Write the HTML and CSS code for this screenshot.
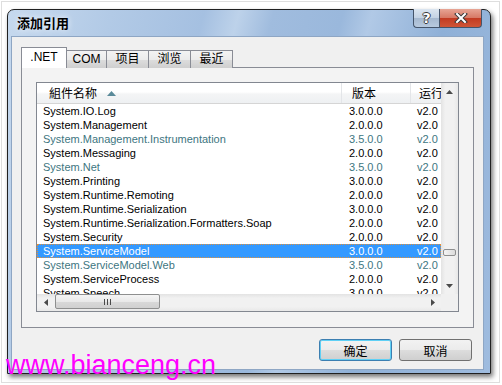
FILE: index.html
```html
<!DOCTYPE html>
<html lang="zh-CN">
<head>
    <meta charset="UTF-8">
    <title>添加引用</title>
    <link rel="stylesheet" href="styles.css">
</head>
<body>
    <div class="shot">
        <div class="window">
            <div class="titlebar">
                <span class="title">添加引用</span>
                <div class="caption-buttons">
                    <span class="cap-btn help">?</span>
                    <span class="cap-btn close">
                        <svg width="14" height="10" viewBox="0 0 14 10">
                            <path d="M3 1 L11 9 M11 1 L3 9" stroke="#3a3a3a" stroke-width="4" stroke-linecap="square"/>
                            <path d="M3 1 L11 9 M11 1 L3 9" stroke="#fff" stroke-width="2" stroke-linecap="square"/>
                        </svg>
                    </span>
                </div>
            </div>

            <div class="client">
                <div class="tabs">
                    <span class="tab active">.NET</span>
                    <span class="tab">COM</span>
                    <span class="tab">项目</span>
                    <span class="tab">浏览</span>
                    <span class="tab">最近</span>
                </div>

                <div class="panel">
                    <div class="list">
                        <div class="list-main">
                            <div class="header">
                                <span class="hcell">組件名称
                                    <svg class="sort" width="9" height="5" viewBox="0 0 9 5"><path d="M4.5 0 L9 5 L0 5 Z" fill="#5a8a99"/></svg>
                                </span>
                                <span class="hcell">版本</span>
                                <span class="hcell">运行</span>
                            </div>
                            <div class="rows">
                                <div class="row"><span>System.IO.Log</span><span>3.0.0.0</span><span>v2.0</span></div>
                                <div class="row"><span>System.Management</span><span>2.0.0.0</span><span>v2.0</span></div>
                                <div class="row dim"><span>System.Management.Instrumentation</span><span>3.5.0.0</span><span>v2.0</span></div>
                                <div class="row"><span>System.Messaging</span><span>2.0.0.0</span><span>v2.0</span></div>
                                <div class="row dim"><span>System.Net</span><span>3.5.0.0</span><span>v2.0</span></div>
                                <div class="row"><span>System.Printing</span><span>3.0.0.0</span><span>v2.0</span></div>
                                <div class="row"><span>System.Runtime.Remoting</span><span>2.0.0.0</span><span>v2.0</span></div>
                                <div class="row"><span>System.Runtime.Serialization</span><span>3.0.0.0</span><span>v2.0</span></div>
                                <div class="row"><span>System.Runtime.Serialization.Formatters.Soap</span><span>2.0.0.0</span><span>v2.0</span></div>
                                <div class="row"><span>System.Security</span><span>2.0.0.0</span><span>v2.0</span></div>
                                <div class="row selected"><span>System.ServiceModel</span><span>3.0.0.0</span><span>v2.0</span></div>
                                <div class="row dim"><span>System.ServiceModel.Web</span><span>3.5.0.0</span><span>v2.0</span></div>
                                <div class="row"><span>System.ServiceProcess</span><span>2.0.0.0</span><span>v2.0</span></div>
                                <div class="row"><span>System.Speech</span><span>3.0.0.0</span><span>v2.0</span></div>
                            </div>
                        </div>

                        <div class="vscroll">
                            <span class="arrow-btn">
                                <svg width="7" height="4" viewBox="0 0 7 4"><path d="M3.5 0 L7 4 L0 4 Z" fill="#4a4a4a"/></svg>
                            </span>
                            <span class="vthumb"></span>
                            <span class="arrow-btn">
                                <svg width="7" height="4" viewBox="0 0 7 4"><path d="M0 0 L7 0 L3.5 4 Z" fill="#4a4a4a"/></svg>
                            </span>
                        </div>

                        <div class="hscroll">
                            <span class="arrow-btn">
                                <svg width="4" height="7" viewBox="0 0 4 7"><path d="M0 3.5 L4 0 L4 7 Z" fill="#4a4a4a"/></svg>
                            </span>
                            <span class="hthumb"><span class="grip"></span></span>
                            <span class="spacer"></span>
                            <span class="arrow-btn">
                                <svg width="4" height="7" viewBox="0 0 4 7"><path d="M0 0 L4 3.5 L0 7 Z" fill="#4a4a4a"/></svg>
                            </span>
                        </div>

                        <div class="corner"></div>
                    </div>
                </div>

                <div class="actions">
                    <button class="btn default">确定</button>
                    <button class="btn">取消</button>
                </div>
            </div>
        </div>

        <div class="watermark">www.bianceng.cn</div>
    </div>
</body>
</html>
```

FILE: styles.css
```css
* {
    box-sizing: border-box;
}
body {
    margin: 0;
    background: #fff;
    font-family: "Liberation Sans", "Noto Sans CJK SC", sans-serif;
    font-size: 11px;
    color: #000;
}
.shot {
    position: relative;
    width: 502px;
    height: 385px;
    padding: 1px;
    overflow: hidden;
}
.shot::before {
    content: "";
    position: absolute;
    left: 1px;
    top: 1px;
    right: 2px;
    bottom: 2px;
    border: 1px solid #dedede;
}

/* window frame */
.window {
    position: relative;
    width: 484px;
    height: 365px;
    margin: 8px 0 0 6px;
    border: 1px solid #202020;
    border-radius: 7px 7px 0 0;
    padding: 0 6px 3px 3px;
    display: flex;
    flex-direction: column;
    background: linear-gradient(105deg, #c6d9ee 0%, #b2cae6 18%, #a5c0e1 34%, #bdd2ea 40%, #a0bcde 46%, #9ab8dc 58%, #b1c9e6 63%, #8fb0d7 76%, #9fbcdf 100%);
    box-shadow: 2px 3px 5px rgba(0, 0, 0, 0.55);
}
.titlebar {
    height: 26px;
    display: flex;
    justify-content: space-between;
    align-items: flex-start;
}
.title {
    padding: 6px 0 0 6px;
    font-family: "Noto Sans CJK SC", sans-serif;
    font-size: 13px;
    font-weight: bold;
    line-height: 14px;
    text-shadow: 0 0 6px rgba(255, 255, 255, 0.9);
}
.caption-buttons {
    display: flex;
    margin: -1px 2px 0 0;
}
.cap-btn {
    height: 19px;
    display: flex;
    align-items: center;
    justify-content: center;
    border: 1px solid #44546a;
    border-top: none;
}
.help {
    width: 26px;
    border-radius: 0 0 0 4px;
    border-right: none;
    background: linear-gradient(#dbe5f0, #c3d2e3 50%, #a5b8cf 51%, #b8cadf);
    font-family: "DejaVu Sans", sans-serif;
    font-size: 14px;
    font-weight: bold;
    color: #fff;
    text-shadow: 1px 0 0 #3a3a3a, -1px 0 0 #3a3a3a, 0 1px 0 #3a3a3a, 0 -1px 0 #3a3a3a;
}
.close {
    width: 43px;
    border-radius: 0 0 4px 0;
    background: linear-gradient(#e7a595, #d77a66 48%, #c23b22 52%, #cf5536);
}

/* client area */
.client {
    flex: 1;
    border: 1px solid #8ea6c4;
    background: #f0f0f0;
    padding: 10px 10px 0 9px;
    display: flex;
    flex-direction: column;
}
.tabs {
    display: flex;
    align-items: flex-end;
    height: 21px;
    margin-bottom: -1px;
    position: relative;
    z-index: 1;
}
.tab {
    height: 18px;
    width: 43px;
    margin-left: -1px;
    border: 1px solid #898c95;
    border-bottom: none;
    background: linear-gradient(#f3f3f3, #ebebeb 50%, #dddddd 51%, #cfcfcf);
    font-family: "Liberation Sans", "Noto Sans CJK SC", sans-serif;
    font-size: 12px;
    line-height: 16px;
    text-align: center;
}
.tab.active {
    height: 21px;
    width: 46px;
    margin-left: 0;
    background: #fff;
    line-height: 19px;
}
.tab.active + .tab {
    margin-left: -1px;
    width: 41px;
}
.panel {
    width: 453px;
    height: 261px;
    border: 1px solid #898c95;
    background: #f3f3f3;
    padding: 14px 14px 0 14px;
}

/* list view */
.list {
    width: 423px;
    height: 230px;
    border: 1px solid #828790;
    background: #fff;
    display: grid;
    grid-template-columns: 404px 17px;
    grid-template-rows: 211px 17px;
}
.list-main {
    overflow: hidden;
}
.header {
    height: 21px;
    display: grid;
    grid-template-columns: 305px 69px 30px;
    background: linear-gradient(#ffffff, #ffffff 45%, #f4f5f6 55%, #eef0f2);
    border-bottom: 1px solid #d5d5d5;
    font-family: "Noto Sans CJK SC", sans-serif;
    font-size: 12px;
    line-height: 20px;
}
.hcell {
    display: flex;
    align-items: center;
    gap: 10px;
    padding-left: 10px;
    border-right: 1px solid #e3e5e8;
    white-space: nowrap;
    overflow: hidden;
}
.hcell:first-child {
    padding-left: 12px;
}
.hcell:last-child {
    padding-left: 8px;
    border-right: none;
}
.sort {
    margin-top: 1px;
}
.row {
    height: 14px;
    display: grid;
    grid-template-columns: 305px 69px 30px;
    line-height: 14px;
    white-space: nowrap;
}
.row span:first-child {
    padding-left: 6px;
}
.row span:nth-child(2) {
    padding-left: 7px;
}
.row span:nth-child(3) {
    padding-left: 6px;
    overflow: hidden;
}
.row.dim {
    color: #40767f;
}
.row.selected {
    background: #3399ff;
    color: #fff;
    outline: 1px dotted #e0903a;
    outline-offset: -1px;
}

/* scrollbars */
.vscroll,
.hscroll,
.corner {
    background: linear-gradient(to right, #e3e3e3, #f1f1f1 25%, #f1f1f1 75%, #e8e8e8);
}
.hscroll {
    background: linear-gradient(#e3e3e3, #f1f1f1 25%, #f1f1f1 75%, #e8e8e8);
    display: flex;
}
.corner {
    background: #f0f0f0;
}
.vscroll {
    display: flex;
    flex-direction: column;
    justify-content: space-between;
    align-items: center;
}
.arrow-btn {
    width: 17px;
    height: 17px;
    display: flex;
    align-items: center;
    justify-content: center;
    flex-shrink: 0;
}
.vthumb {
    width: 13px;
    height: 7px;
    margin-top: 149px;
    margin-bottom: auto;
    border: 1px solid #8e8f8f;
    border-radius: 2px;
    background: linear-gradient(to right, #f4f4f4, #dcdcdc);
}
.hthumb {
    width: 105px;
    height: 15px;
    margin-left: 1px;
    border: 1px solid #8e8f8f;
    border-radius: 2px;
    background: linear-gradient(#f5f5f5, #e9e9e9 50%, #d9d9d9 51%, #d0d0d0);
    display: flex;
    align-items: center;
    justify-content: center;
}
.grip {
    width: 7px;
    height: 6px;
    background: repeating-linear-gradient(to right, #4a4a4a 0 1px, transparent 1px 3px);
}
.spacer {
    flex: 1;
}

/* dialog buttons */
.actions {
    display: flex;
    justify-content: flex-end;
    gap: 7px;
    margin: 11px 1px 0 0;
}
.btn {
    width: 73px;
    height: 22px;
    padding: 0;
    border: 1px solid #707070;
    border-radius: 3px;
    background: linear-gradient(#f2f2f2, #ebebeb 50%, #dddddd 51%, #cfcfcf);
    font-family: "Noto Sans CJK SC", sans-serif;
    font-size: 12px;
    color: #000;
}
.btn.default {
    border-color: #3c7fb1;
    box-shadow: inset 0 0 0 1px #5fd0f5;
}

/* blog watermark */
.watermark {
    position: absolute;
    left: 6px;
    top: 352px;
    font-family: "Liberation Sans", sans-serif;
    font-size: 27px;
    line-height: 27px;
    color: #ff00ff;
}
```
